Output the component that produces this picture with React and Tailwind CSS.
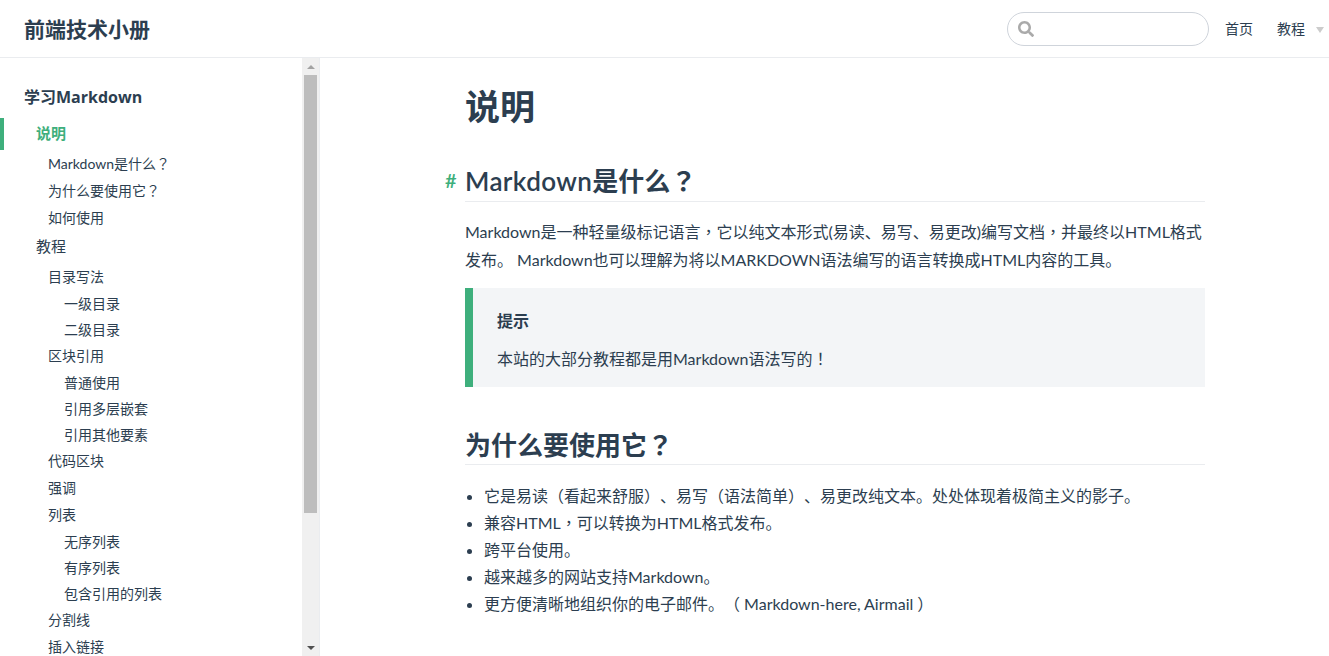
import { FaSearch } from "react-icons/fa";

const FONT = "font-['Lato','Noto_Sans_CJK_SC',sans-serif]";

// the reference centres these marks in their cell, as the TC cut does
function Zh({ children }) {
  return children.split(/([，？！])/).map((part, i) =>
    i % 2 ? (
      <span key={i} className="font-['Noto_Sans_CJK_TC',sans-serif]">
        {part}
      </span>
    ) : (
      part
    ),
  );
}

const items = [
  { label: "Markdown是什么？", level: 2, h: "h-[27px]" },
  { label: "为什么要使用它？", level: 2, h: "h-[27px]" },
  { label: "如何使用", level: 2, h: "h-[27px]" },
  { label: "教程", level: 1, h: "h-[32px] pb-[2px]" },
  { label: "目录写法", level: 2, h: "h-[27px]" },
  { label: "一级目录", level: 3, h: "h-[26px]" },
  { label: "二级目录", level: 3, h: "h-[26px]" },
  { label: "区块引用", level: 2, h: "h-[27px]" },
  { label: "普通使用", level: 3, h: "h-[26px]" },
  { label: "引用多层嵌套", level: 3, h: "h-[26px]" },
  { label: "引用其他要素", level: 3, h: "h-[26px]" },
  { label: "代码区块", level: 2, h: "h-[27px]" },
  { label: "强调", level: 2, h: "h-[27px]" },
  { label: "列表", level: 2, h: "h-[27px]" },
  { label: "无序列表", level: 3, h: "h-[26px]" },
  { label: "有序列表", level: 3, h: "h-[26px]" },
  { label: "包含引用的列表", level: 3, h: "h-[26px]" },
  { label: "分割线", level: 2, h: "h-[27px]" },
  { label: "插入链接", level: 2, h: "h-[27px]" },
];

const padding = { 1: "pl-[36px] text-[15px]", 2: "pl-[48px] text-[14px]", 3: "pl-[64px] text-[14px]" };

function Sidebar() {
  return (
    <aside className="flex h-full w-[320px] shrink-0 overflow-hidden border-r border-[#eaecef]">
      <div className="min-w-0 flex-1 pt-[26px]">
        <h3 className="pl-6 font-['Open_Sans','Noto_Sans_CJK_SC',sans-serif] text-[16px] font-bold leading-[26px] text-[#2c3e50]">
          学习Markdown
        </h3>
        <div className="mt-[8px] flex h-[32px] items-center border-l-4 border-[#3eaf7c] pb-[2px] pl-[32px] text-[15px] font-bold text-[#3eaf7c]">
          说明
        </div>
        {items.map((item) => (
          <div key={item.label} className={`flex items-center text-[#2c3e50] ${item.h} ${padding[item.level]}`}>
            <div>
              <Zh>{item.label}</Zh>
            </div>
          </div>
        ))}
      </div>
      <div className="flex w-[17px] shrink-0 flex-col items-center bg-[#f0f0f0]">
        <div className="flex h-[17px] w-full items-center justify-center">
          <div className="h-0 w-0 border-x-[4px] border-b-[4px] border-x-transparent border-b-[#a3a3a3]" />
        </div>
        <div className="h-[438px] w-[13px] bg-[#bdbdbd]" />
        <div className="flex-1" />
        <div className="flex h-[17px] w-full items-center justify-center">
          <div className="h-0 w-0 border-x-[4px] border-t-[4px] border-x-transparent border-t-[#505050]" />
        </div>
      </div>
    </aside>
  );
}

function Content() {
  return (
    <main className="min-w-0 flex-1 overflow-hidden pl-[145px] pt-[20px] text-[#2c3e50]">
      <div className="w-[740px]">
        <h1 className="text-[35px] font-bold leading-[56px]">说明</h1>
        <h2 className="relative mt-[25px] border-b border-[#eaecef] pt-[1px] text-[26px] font-semibold leading-[39px]">
          <span className="absolute left-[-20px] top-[2px] text-[20px] text-[#3eaf7c]">#</span>
          <span className="tracking-[0.4px]">Markdown</span>
          <Zh>是什么？</Zh>
        </h2>
        <p className="mt-[15px] text-[16px] leading-[28px]">
          <Zh>Markdown是一种轻量级标记语言，它以纯文本形式(易读、易写、易更改)编写文档，并最终以HTML格式发布。 Markdown也可以理解为将以MARKDOWN语法编写的语言转换成HTML内容的工具。</Zh>
        </p>
        <div className="mt-[14px] h-[99px] border-l-[8px] border-[#3eaf7c] bg-[#f3f5f7] pl-[24px] pt-[19px] text-[16px]">
          <p className="font-semibold leading-[28px]">提示</p>
          <p className="mt-[9px] leading-[28px]">
            <Zh>本站的大部分教程都是用Markdown语法写的！</Zh>
          </p>
        </div>
        <h2 className="mt-[38px] border-b border-[#eaecef] text-[26px] font-semibold leading-[37px]">
          <Zh>为什么要使用它？</Zh>
        </h2>
        <ul className="mt-[17px] list-disc pl-[19px] text-[16px] leading-[27px]">
          <li>它是易读（看起来舒服）、易写（语法简单）、易更改纯文本。处处体现着极简主义的影子。</li>
          <li>
            <Zh>兼容HTML，可以转换为HTML格式发布。</Zh>
          </li>
          <li>跨平台使用。</li>
          <li>越来越多的网站支持Markdown。</li>
          <li>更方便清晰地组织你的电子邮件。（ Markdown-here, Airmail ）</li>
        </ul>
      </div>
    </main>
  );
}

export default function App() {
  return (
    <div className={`flex h-[656px] flex-col overflow-hidden bg-white [text-spacing-trim:space-all] ${FONT}`}>
      <header className="flex h-[58px] shrink-0 items-center border-b border-[#eaecef] pl-6 pr-[5px]">
        <div className="pt-[1px] text-[21px] font-bold text-[#2c3e50]">前端技术小册</div>
        <div className="ml-auto flex items-center">
          <div className="flex h-[34px] w-[202px] items-center rounded-full border border-[#cfd4db] pl-[10px]">
            <FaSearch size={16} className="text-[#aaaaaa]" />
          </div>
          <span className="ml-[16px] text-[14px] text-[#2c3e50]">首页</span>
          <span className="ml-[24px] text-[14px] text-[#2c3e50]">教程</span>
          <div className="ml-[11px] mt-[2px] h-0 w-0 border-x-[4px] border-t-[6px] border-x-transparent border-t-[#cccccc]" />
        </div>
      </header>
      <div className="flex min-h-0 flex-1">
        <Sidebar />
        <Content />
      </div>
    </div>
  );
}
